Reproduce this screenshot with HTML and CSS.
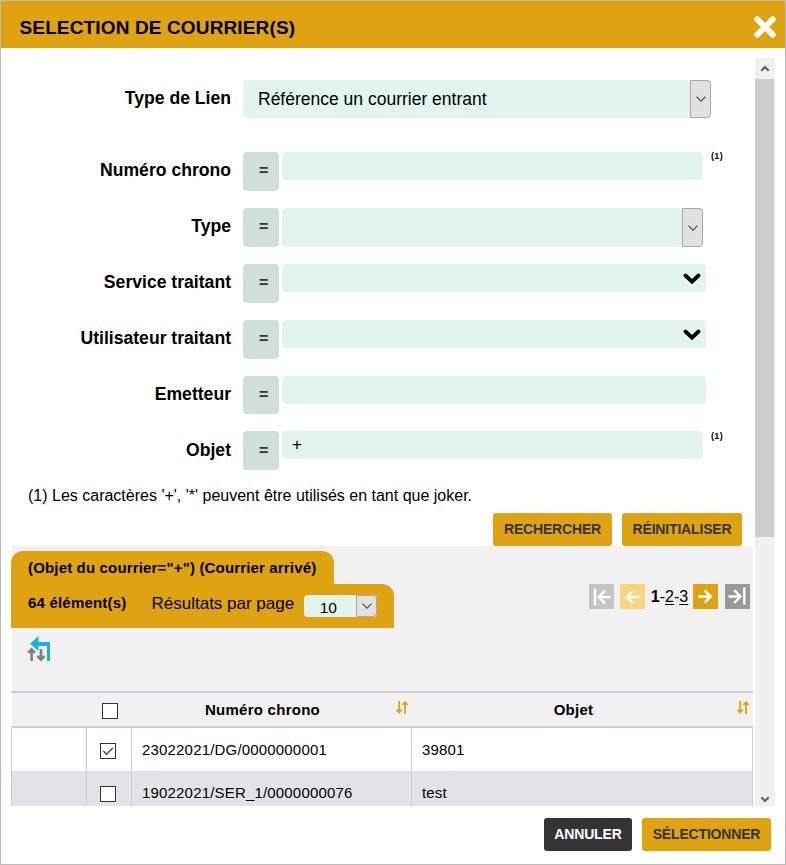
FILE: index.html
```html
<!DOCTYPE html>
<html lang="fr">
<head>
<meta charset="utf-8">
<title>Sélection de courrier(s)</title>
<link rel="stylesheet" href="styles.css">
</head>
<body>
<svg class="defs" width="0" height="0">
  <symbol id="thin-down" viewBox="0 0 10 6"><path d="M.5 .6 5 5.1 9.5 .6" fill="none" stroke="#444" stroke-width="1.1"/></symbol>
  <symbol id="bold-down" viewBox="0 0 18 12"><path d="M2.5 2.5 9 8.6 15.5 2.5" fill="none" stroke="#000" stroke-width="3.8" stroke-linecap="round"/></symbol>
  <symbol id="sort" viewBox="0 0 12 13"><path d="M3.2 0v11M.6 8.7l2.6 2.8 2.6-2.8M9 13V1.5M6.3 4 9 1.2 11.7 4" fill="none" stroke="#dfa20f" stroke-width="1.8"/></symbol>
</svg>
<div class="dialog">
  <header class="titlebar">
    <h1>SELECTION DE COURRIER(S)</h1>
    <svg class="close" viewBox="0 0 22 22"><path d="M3.2 3.2 18.8 18.8M18.8 3.2 3.2 18.8" stroke="#fff" stroke-width="5.8" stroke-linecap="round"/></svg>
  </header>
  <div class="viewport">
    <div class="content">
      <div class="form">
        <div class="row first"><label>Type de Lien</label><div class="select wide"><span>Référence un courrier entrant</span><i><svg><use href="#thin-down"/></svg></i></div></div>
        <div class="row"><label>Numéro chrono</label><b class="op">=</b><div class="input short"></div><sup>(1)</sup></div>
        <div class="row"><label>Type</label><b class="op">=</b><div class="select"><span></span><i><svg><use href="#thin-down"/></svg></i></div></div>
        <div class="row"><label>Service traitant</label><b class="op">=</b><div class="input"><svg class="chev"><use href="#bold-down"/></svg></div></div>
        <div class="row"><label>Utilisateur traitant</label><b class="op">=</b><div class="input"><svg class="chev"><use href="#bold-down"/></svg></div></div>
        <div class="row before-last"><label>Emetteur</label><b class="op">=</b><div class="input"></div></div>
        <div class="row last"><label>Objet</label><b class="op">=</b><div class="input short">+</div><sup>(1)</sup></div>
      </div>
      <p class="note">(1) Les caractères '+', '*' peuvent être utilisés en tant que joker.</p>
      <div class="actions"><button class="search">RECHERCHER</button><button class="reset">RÉINITIALISER</button></div>
      <section class="results">
        <div class="summary">
          <div class="tabs">
            <div class="tab query"><span>(Objet du courrier="+") (Courrier arrivé)</span></div>
            <div class="tab count"><b>64 élément(s)</b><span class="per">Résultats par page</span><div class="select mini"><span>10</span><i><svg><use href="#thin-down"/></svg></i></div></div>
          </div>
          <nav class="pager">
            <svg class="pg off" viewBox="0 0 25 25"><path d="M6 4.5v17M21.5 13H10M16 6.7 9.7 13l6.3 6.3"/></svg>
            <svg class="pg prev" viewBox="0 0 25 25"><path d="M19.5 13H7M13 6.9 6.9 13l6.1 6.1"/></svg>
            <span class="pages"><b>1</b>-<u>2</u>-<u>3</u></span>
            <svg class="pg next" viewBox="0 0 25 25"><path d="M5 12.5h12.5M11.6 6.4l6.1 6.1-6.1 6.1"/></svg>
            <svg class="pg end" viewBox="0 0 25 25"><path d="M19.3 3.5v17M3.5 12.5H15M9.2 6.2l6.3 6.3-6.3 6.3"/></svg>
          </nav>
        </div>
        <svg class="undo" viewBox="0 0 24 26"><path d="M11.5 0v6H23v19h-3V10h-8.500v5L3 7.8z" fill="#19b1e5"/><path d="M4.6 25V14M1.2 16.9 4.6 13.300l3.4 3.6M14 13v10M10.4 20 14 23.600l3.6-3.6" fill="none" stroke="#808080" stroke-width="2.6"/></svg>
        <table>
          <colgroup><col class="c1"><col class="c2"><col class="c3"><col class="c4"></colgroup>
          <thead><tr><th></th><th><span class="box"></span></th><th><div class="head"><span>Numéro chrono</span><svg><use href="#sort"/></svg></div></th><th><div class="head end-col"><span>Objet</span><svg><use href="#sort"/></svg></div></th></tr></thead>
          <tbody>
            <tr><td></td><td class="pick"><span class="box"><svg viewBox="0 0 14 14"><path d="m2.3 7 3.2 3.3 6.3-6.2" fill="none" stroke="#444" stroke-width="1.4"/></svg></span></td><td>23022021/DG/0000000001</td><td>39801</td></tr>
            <tr class="alt"><td></td><td class="pick"><span class="box"></span></td><td>19022021/SER_1/0000000076</td><td>test</td></tr>
          </tbody>
        </table>
      </section>
    </div>
    <div class="scrollbar">
      <svg viewBox="0 0 19 21"><path d="M5.3 12.8 9 9l3.7 3.8" /></svg>
      <div class="track"><div class="thumb"></div></div>
      <svg viewBox="0 0 19 17"><path d="M5.3 8.3 9 12l3.7-3.7"/></svg>
    </div>
  </div>
  <footer><button class="cancel">ANNULER</button><button class="select-btn">SÉLECTIONNER</button></footer>
</div>
</body>
</html>
```

FILE: styles.css
```css
* { box-sizing: border-box; }
body { margin: 0; font-family: "Liberation Sans", Arial, sans-serif; color: #000; background: #fff; }
.defs { position: absolute; }
.dialog { width: 786px; height: 865px; border: 1px solid #bfbbb5; display: flex; flex-direction: column; overflow: hidden; }
.titlebar { height: 47px; flex: none; background: #dfa311; display: flex; justify-content: space-between; align-items: center; padding: 4px 9px 0 18.5px; }
h1 { margin: 3px 0 0; font-size: 19px; line-height: 24px; letter-spacing: .14px; white-space: nowrap; }
.close { width: 22px; height: 22px; }
.viewport { height: 748px; margin: 10px 10px 0; display: flex; justify-content: space-between; overflow: hidden; }
.content { width: 742px; }

.form { padding-top: 22px; }
.row { height: 56px; display: flex; align-items: flex-start; }
.row.first { height: 72px; }
.row.before-last { height: 55px; }
.row.last { height: 49px; }
label { width: 220px; margin-right: 12px; text-align: right; font-size: 17.6px; font-weight: bold; line-height: 36px; white-space: nowrap; }
.last label { line-height: 38px; }
.op { width: 36px; height: 39px; margin-right: 3px; border-radius: 4px; background: #d0dfd8; color: #333; font-size: 16px; font-weight: bold; line-height: 37px; padding-left: 16px; }
.last .op { line-height: 39px; }
.row.before-last .op { height: 38px; }
.input { width: 424px; height: 28px; border-radius: 4px; background: #e1f4ed; padding: 0 4px 0 10px; font-size: 17px; line-height: 28px; display: flex; justify-content: space-between; }
.input.short { width: 421px; }
.chev { width: 18px; height: 12px; margin: 9px 1px 0 auto; }
sup { margin-left: 8px; font-size: 9px; font-weight: bold; line-height: 8px; letter-spacing: .35px; }
.last sup { line-height: 10px; }
.select { width: 421px; height: 39px; border-radius: 4px; background: #e1f4ed; display: flex; justify-content: space-between; }
.select.wide { width: 468px; height: 38px; font-size: 17.5px; line-height: 38px; padding-left: 15px; }
.select i { width: 21px; flex: none; border: 1px solid #a9a9a9; border-radius: 0 4px 4px 0; background: #e1e1e1; display: flex; align-items: center; justify-content: center; }
.select svg { width: 10px; height: 6px; }
.note { margin: 0 0 0 17px; font-size: 16px; line-height: 20px; height: 33px; padding-top: 6px; white-space: nowrap; }
button { border: 0; border-radius: 3px; height: 33px; padding: 0 0 1px; font: bold 14px "Liberation Sans", Arial, sans-serif; letter-spacing: -.17px; background: #dfa311; color: #333; white-space: nowrap; }
.actions { display: flex; justify-content: flex-end; gap: 10px; padding-right: 11px; }
.search { width: 119px; }
.reset { width: 120px; }

.results { height: 300px; background: linear-gradient(#f1f1f1, #f1f1f1) 1px 0 no-repeat; }
.summary { display: flex; justify-content: space-between; height: 82px; padding-top: 5px; }
.tab { background: #dfa311; white-space: nowrap; padding-left: 17px; }
.query { width: 323px; height: 33px; border-radius: 12px 12px 0 0; font-size: 15px; font-weight: bold; line-height: 34px; letter-spacing: .16px; }
.count { width: 383px; height: 44px; border-radius: 0 12px 0 0; display: flex; font-size: 15px; line-height: 38px; }
.count b { letter-spacing: .2px; }
.per { margin-left: 25px; font-size: 17px; line-height: 39px; }
.select.mini { width: 73px; height: 22px; margin: 11px 0 0 10px; font-size: 15.5px; line-height: 26px; padding-left: 15.5px; }
.pager { display: flex; padding: 33px 3px 0 0; }
.pg { width: 25px; height: 25px; fill: none; stroke: #fff; stroke-width: 2.4; }
.off { background: #c4c4c4; margin-right: 6px; }
.prev { background: #f8d47e; }
.pages { width: 48px; padding-left: 1px; font-size: 16px; line-height: 25px; text-align: center; white-space: nowrap; }
.pages b { font-size: 16px; }
.pages u { text-underline-offset: 2px; text-decoration-thickness: 1px; }
.next { background: #dfa311; margin-right: 7px; }
.end { background: #999; }
.undo { display: block; width: 24px; height: 26px; margin: 8px 0 29px 16px; }
table { width: 742px; border-collapse: separate; border-spacing: 0; table-layout: fixed; font-size: 15px; }
.c1 { width: 75px; } .c2 { width: 45px; } .c3 { width: 280px; } .c4 { width: 342px; }
th { height: 37px; padding: 0; border-top: 2px solid #cbced5; border-bottom: 2px solid #cbced5; }
th:first-child { border-left: 1px solid #fff; }
.head { display: flex; align-items: center; height: 33px; letter-spacing: .25px; }
.head span { flex: 1; line-height: 33px; padding-right: 2px; }
.head svg { width: 12px; height: 13px; margin: -4px 3px 0 0; }
.end-col svg { margin-right: 4px; }
.end-col span { padding-right: 1px; }
.box { display: block; width: 16px; height: 16px; border: 1px solid #333; background: #fff; margin: 2px 0 0 16px; }
.box svg { display: block; width: 14px; height: 14px; }
td { height: 43px; padding: 0 0 0 10px; border-left: 1px solid #cbced5; background: #fff; white-space: nowrap; letter-spacing: .18px; }
td:last-child { border-right: 1px solid #cbced5; }
.alt td { background: #e1e4e7; }
.pick { padding: 0; }
.pick .box { margin-left: 13px; }

.scrollbar { width: 20px; display: flex; flex-direction: column; background: #f0f0f0; }
.scrollbar svg { width: 19px; height: 21px; flex: none; margin-left: 1px; fill: none; stroke: #606060; stroke-width: 2.2; }
.scrollbar svg:last-child { height: 17px; }
.track { flex: 1; }
.thumb { width: 19px; height: 458px; background: #cdcdcd; }
footer { display: flex; justify-content: flex-end; gap: 10px; padding: 12px 14px 0 0; }
.cancel { width: 88px; background: #333; color: #fff; }
.select-btn { width: 129px; }
```
